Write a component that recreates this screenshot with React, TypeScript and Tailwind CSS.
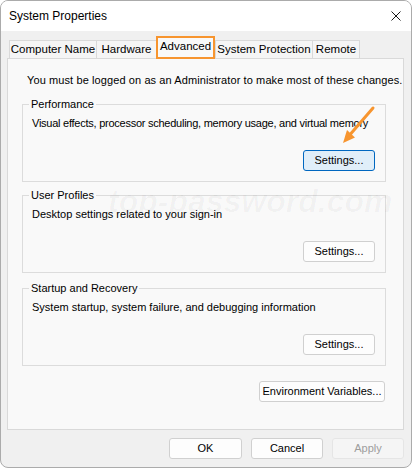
import React from 'react';

const tabs = [
  { label: 'Computer Name', w: 'w-[87px]' },
  { label: 'Hardware', w: 'w-[60px]' },
  { label: 'Advanced', w: 'w-[59px]', active: true },
  { label: 'System Protection', w: 'w-[97px]' },
  { label: 'Remote', w: 'w-[48px]', last: true },
];

const Button = ({ label, className = '', focused = false, disabled = false }: { label: string; className?: string; focused?: boolean; disabled?: boolean }) => (
  <button
    className={
      'h-[21px] rounded-[3px] border text-[11px] leading-none whitespace-nowrap flex items-center justify-center ' +
      (focused
        ? 'bg-[#e0eef9] border-[#0067c0] text-black '
        : disabled
        ? 'bg-[#f5f5f5] border-[#e5e5e5] text-[#9d9d9d] '
        : 'bg-[#fdfdfd] border-[#d0d0d0] text-black ') +
      className
    }
  >
    {label}
  </button>
);

const Group = ({ title, text, focused = false, className = '', textClass = '' }: { title: string; text: string; focused?: boolean; className?: string; textClass?: string }) => (
  <fieldset className={'ml-[14px] w-[364px] min-w-0 border border-[#dcdcdc] pl-[9px] pr-[10px] pb-[10px] ' + className}>
    <legend className="-ml-[3px] px-[2px] text-[11px] leading-[14px] whitespace-nowrap">{title}</legend>
    <p className={'mt-[4px] text-[11px] leading-[16px] whitespace-nowrap ' + textClass}>{text}</p>
    <div className="mt-[19px] flex justify-end">
      <Button label="Settings..." focused={focused} className="w-[72px]" />
    </div>
  </fieldset>
);

export default function App() {
  return (
    <div className="w-[412px] h-[468px] bg-white font-['Liberation_Sans',Arial,sans-serif] text-black">
      <div className="relative w-[412px] h-[468px] rounded-[8px] border border-[#ababab] overflow-hidden flex flex-col bg-[#f0f0f0]">
        {/* title bar */}
        <div className="h-[30px] bg-white flex items-center justify-between pl-[8px] pr-[10px]">
          <span className="text-[12px]">System Properties</span>
          <svg width="10" height="10" viewBox="0 0 10 10">
            <path d="M0.5 0.5 L9.5 9.5 M9.5 0.5 L0.5 9.5" stroke="#1a1a1a" strokeWidth="1" fill="none" />
          </svg>
        </div>

        {/* body */}
        <div className="flex-1 flex flex-col px-[6px]">
          <div className="flex items-end pt-[5px] pl-[2px] h-[27px]">
            {tabs.map((t) =>
              t.active ? (
                <div
                  key={t.label}
                  className={t.w + ' relative z-10 -mb-px h-[23px] border-2 border-[#f7952f] bg-[#f9f9f9] flex items-center justify-center text-[11.5px] whitespace-nowrap pb-[2px]'}
                >
                  {t.label}
                </div>
              ) : (
                <div
                  key={t.label}
                  className={
                    t.w +
                    ' h-[18px] border-t border-l border-[#d9d9d9] bg-[#f5f5f5] flex items-center justify-center text-[11.5px] whitespace-nowrap ' +
                    (t.last ? 'border-r' : '')
                  }
                >
                  {t.label}
                </div>
              )
            )}
          </div>

          {/* panel */}
          <div className="relative h-[372px] w-[397px] border border-[#d9d9d9] bg-[#f9f9f9] pt-[13px]">
            <p className="pl-[19px] text-[11px] leading-[16px] whitespace-nowrap tracking-[0.1px]">
              You must be logged on as an Administrator to make most of these changes.
            </p>
            <Group
              className="mt-[9px]"
              title="Performance"
              text="Visual effects, processor scheduling, memory usage, and virtual memory"
              textClass="tracking-[-0.25px]"
              focused
            />
            <Group className="mt-[6px]" title="User Profiles" text="Desktop settings related to your sign-in" />
            <Group className="mt-[8px]" title="Startup and Recovery" text="System startup, system failure, and debugging information" />
            <div className="mt-[15px] w-[377px] flex justify-end">
              <Button label="Environment Variables..." className="w-[126px]" />
            </div>

            {/* watermark */}
            <div className="pointer-events-none absolute left-[100px] top-[126px] text-[32px] font-bold italic leading-none text-black/[0.03] whitespace-nowrap">
              top-password.com
            </div>

            {/* annotation arrow */}
            <svg className="pointer-events-none absolute left-[330px] top-[45px]" width="40" height="44" viewBox="0 0 40 44">
              <line x1="35" y1="4" x2="13" y2="29.5" stroke="#f7952f" strokeWidth="3" strokeLinecap="round" />
              <polygon points="5,39 17,33.5 9,26" fill="#f7952f" />
            </svg>
          </div>

          {/* footer */}
          <div className="mt-[8px] flex justify-end gap-[9px] pr-[1px]">
            <Button label="OK" className="w-[73px]" />
            <Button label="Cancel" className="w-[72px]" />
            <Button label="Apply" disabled className="w-[72px]" />
          </div>
        </div>
      </div>
    </div>
  );
}
